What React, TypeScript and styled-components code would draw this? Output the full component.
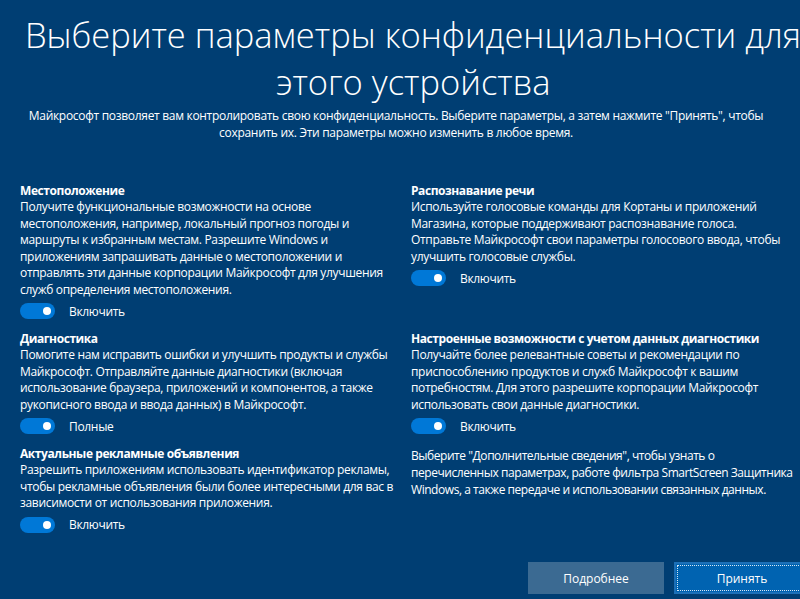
import * as React from 'react'
import styled, { createGlobalStyle } from 'styled-components'

const GlobalStyle = createGlobalStyle`
  html, body {
    margin: 0;
    padding: 0;
    background: #003e73;
    overflow: hidden;
  }
`

interface Section {
  title?: string
  lines: string[]
  toggle?: string
}

const sections: Section[] = [
  {
    title: 'Местоположение',
    lines: [
      'Получите функциональные возможности на основе',
      'местоположения, например, локальный прогноз погоды и',
      'маршруты к избранным местам. Разрешите Windows и',
      'приложениям запрашивать данные о местоположении и',
      'отправлять эти данные корпорации Майкрософт для улучшения',
      'служб определения местоположения.',
    ],
    toggle: 'Включить',
  },
  {
    title: 'Распознавание речи',
    lines: [
      'Используйте голосовые команды для Кортаны и приложений',
      'Магазина, которые поддерживают распознавание голоса.',
      'Отправьте Майкрософт свои параметры голосового ввода, чтобы',
      'улучшить голосовые службы.',
    ],
    toggle: 'Включить',
  },
  {
    title: 'Диагностика',
    lines: [
      'Помогите нам исправить ошибки и улучшить продукты и службы',
      'Майкрософт. Отправляйте данные диагностики (включая',
      'использование браузера, приложений и компонентов, а также',
      'рукописного ввода и ввода данных) в Майкрософт.',
    ],
    toggle: 'Полные',
  },
  {
    title: 'Настроенные возможности с учетом данных диагностики',
    lines: [
      'Получайте более релевантные советы и рекомендации по',
      'приспособлению продуктов и служб Майкрософт к вашим',
      'потребностям. Для этого разрешите корпорации Майкрософт',
      'использовать свои данные диагностики.',
    ],
    toggle: 'Включить',
  },
  {
    title: 'Актуальные рекламные объявления',
    lines: [
      'Разрешить приложениям использовать идентификатор рекламы,',
      'чтобы рекламные объявления были более интересными для вас в',
      'зависимости от использования приложения.',
    ],
    toggle: 'Включить',
  },
  {
    lines: [
      'Выберите "Дополнительные сведения", чтобы узнать о',
      'перечисленных параметрах, работе фильтра SmartScreen Защитника',
      'Windows, а также передаче и использовании связанных данных.',
    ],
  },
]

const App: React.FC = () => {
  return (
    <Page>
      <GlobalStyle />
      <Title>
        Выберите параметры конфиденциальности для
        <br />
        этого устройства
      </Title>
      <Subtitle>
        Майкрософт позволяет вам контролировать свою конфиденциальность. Выберите параметры, а затем нажмите
        "Принять", чтобы
        <br />
        сохранить их. Эти параметры можно изменить в любое время.
      </Subtitle>
      <Grid>
        {sections.map((s, i) => (
          <Block key={i}>
            {s.title && <Heading>{s.title}</Heading>}
            <Body $note={!s.title}>
              {s.lines.map((l, j) => (
                <Line key={j}>{l}</Line>
              ))}
            </Body>
            {s.toggle && (
              <ToggleRow>
                <Switch aria-checked="true" role="switch" />
                <ToggleLabel>{s.toggle}</ToggleLabel>
              </ToggleRow>
            )}
          </Block>
        ))}
      </Grid>
      <Footer>
        <Button>Подробнее</Button>
        <Button $primary>Принять</Button>
      </Footer>
    </Page>
  )
}

const Page = styled.div`
  width: 826px;
  height: 599px;
  display: flex;
  flex-direction: column;
  color: #ffffff;
  font-family: 'Open Sans', 'Noto Sans', sans-serif;
  box-sizing: border-box;
  padding-top: 11px;
`

const Title = styled.h1`
  margin: 0;
  font-size: 34.5px;
  font-weight: 300;
  line-height: 47px;
  text-align: center;
  white-space: nowrap;
`

const Subtitle = styled.p`
  margin: 2px 0 0;
  padding-right: 34px;
  font-size: 12px;
  letter-spacing: -0.3px;
  line-height: 17px;
  text-align: center;
  white-space: nowrap;
`

const Grid = styled.div`
  display: grid;
  grid-template-columns: 380px 380px;
  column-gap: 11px;
  row-gap: 9px;
  margin-top: 41px;
  padding-left: 20px;
  font-size: 12px;
  letter-spacing: -0.32px;
`

const Block = styled.section`
  display: flex;
  flex-direction: column;
  align-items: flex-start;
`

const Heading = styled.h2`
  margin: 0;
  font-size: 12px;
  font-weight: 700;
  letter-spacing: -0.42px;
  line-height: 17px;
`

const Body = styled.p<{ $note?: boolean }>`
  margin: ${(p) => (p.$note ? '2px 0 0' : '0')};
  letter-spacing: ${(p) => (p.$note ? '-0.45px' : 'inherit')};
  line-height: ${(p) => (p.$note ? '17px' : '16.5px')};
`

const Line = styled.span`
  display: block;
  white-space: nowrap;
`

const ToggleRow = styled.div`
  display: flex;
  align-items: center;
  gap: 14px;
  height: 20px;
  margin-top: 3px;
`

const Switch = styled.span`
  position: relative;
  width: 35px;
  height: 16px;
  border-radius: 8px;
  background: #0078d7;

  &::after {
    content: '';
    position: absolute;
    right: 4px;
    top: 4px;
    width: 8px;
    height: 8px;
    border-radius: 50%;
    background: #ffffff;
  }
`

const ToggleLabel = styled.span`
  font-size: 12px;
`

const Footer = styled.div`
  display: flex;
  justify-content: flex-end;
  gap: 10px;
  margin-top: auto;
  padding: 0 16px 5px 0;
`

const Button = styled.button<{ $primary?: boolean }>`
  position: relative;
  width: 136px;
  height: 32px;
  box-sizing: border-box;
  border: 2px solid ${(p) => (p.$primary ? '#1c70b8' : '#3b6a92')};
  background: ${(p) => (p.$primary ? '#0063b1' : '#3b6a92')};
  color: #ffffff;
  font-family: inherit;
  font-size: 12px;
  padding: 0;

  &::after {
    content: '';
    display: ${(p) => (p.$primary ? 'block' : 'none')};
    position: absolute;
    inset: 1px;
    border: 1px dotted rgba(255, 255, 255, 0.85);
  }
`

export default App
